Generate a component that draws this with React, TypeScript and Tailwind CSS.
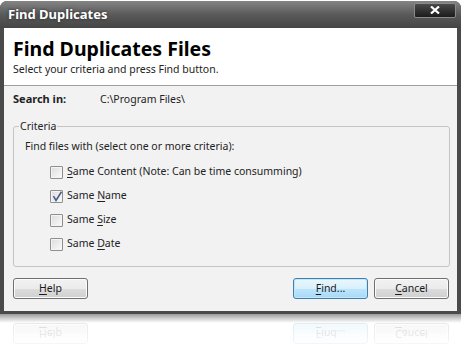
import React from "react";

const font = { fontFamily: '"Noto Sans", "Open Sans", sans-serif' };

function Check({ checked }: { checked?: boolean }) {
  return (
    <span className="relative w-[13px] h-[13px] border border-[#8f8f8f] rounded-[1px] bg-gradient-to-br from-[#dcdcdc] to-[#fbfbfb] shadow-[inset_0_0_0_1px_#f4f4f4] shrink-0">
      {checked && (
        <svg className="absolute left-[1px] top-[0px]" width="11" height="11" viewBox="0 0 11 11">
          <path d="M1.5 5.2 L4 9.5 L9.5 0.8" fill="none" stroke="#4a5f8a" strokeWidth="1.6" />
        </svg>
      )}
    </span>
  );
}

function Btn({ label, u, primary }: { label: string; u: string; primary?: boolean }) {
  const rest = label.slice(1);
  return (
    <button
      className={
        "w-[75px] h-[21px] rounded-[3px] border text-[10.5px] leading-none text-[#1a1a1a] " +
        (primary
          ? "border-[#3c7fb1] bg-[linear-gradient(#eaf6fd_0%,#d9f0fc_50%,#bee6fd_50%,#a7d9f5_100%)] shadow-[inset_0_0_0_1px_#c6e6f8]"
          : "border-[#707070] bg-[linear-gradient(#f2f2f2_0%,#ebebeb_50%,#dddddd_50%,#cfcfcf_100%)] shadow-[inset_0_0_0_1px_#fbfbfb]")
      }
    >
      <span className="underline underline-offset-2">{u}</span>
      {rest}
    </button>
  );
}

function ButtonRow() {
  return (
    <div className="flex items-center pl-[9px] pr-[8px]">
      <Btn label="Help" u="H" />
      <div className="flex-1" />
      <Btn label="Find..." u="F" primary />
      <div className="w-[6px]" />
      <Btn label="Cancel" u="C" />
    </div>
  );
}

export default function App() {
  const rows = [
    { u: "S", rest: "ame Content (Note: Can be time consumming)", pre: "" },
    { u: "N", rest: "ame", pre: "Same ", checked: true },
    { u: "S", rest: "ize", pre: "Same " },
    { u: "D", rest: "ate", pre: "Same " },
  ];
  return (
    <div className="w-[463px] h-[354px] bg-white overflow-hidden" style={font}>
      <div className="w-[461px] mt-[1px] rounded-t-[7px] bg-[#4a4a4a] px-[4px] pb-[3px] shadow-[0_1px_0_#303030]">
        {/* title bar */}
        <div className="h-[27px] -mx-[4px] px-[8px] rounded-t-[7px] bg-gradient-to-b from-[#858585] via-[#5a5a5a] to-[#454545] flex items-center justify-between">
          <span className="text-white font-bold text-[13px] [text-shadow:0_0_3px_#222]">Find Duplicates</span>
          <span className="w-[42px] h-[15px] -mt-[9px] -mr-[3px] border border-[#8a8a8a] rounded-[2px] bg-gradient-to-b from-[#4a4a4a] to-[#1c1c1c] flex items-center justify-center">
            <svg width="10" height="8" viewBox="0 0 10 8">
              <path d="M1 0.5 L9 7.5 M9 0.5 L1 7.5" stroke="white" strokeWidth="2.2" />
            </svg>
          </span>
        </div>
        {/* client */}
        <div className="bg-[#f2f2f2] h-[283px] flex flex-col">
          <div className="bg-white h-[58px] border-b border-[#a0a0a0] pl-[9px] pt-[8px]">
            <div className="text-[19.5px] font-bold leading-[26px] text-black">Find Duplicates Files</div>
            <div className="text-[10.5px] leading-[14px] text-[#222]">Select your criteria and press Find button.</div>
          </div>
          <div className="flex items-center h-[27px] pl-[9px] text-[10.5px] text-[#222]">
            <span className="w-[87px] font-bold text-[11px]">Search in:</span>
            <span>C:\Program Files\</span>
          </div>
          <fieldset className="mt-[6px] ml-[9px] w-[437px] h-[148px] border border-[#c5c5c5] rounded-[3px] px-[11px] pt-[5px]">
            <legend className="text-[10.5px] text-[#222] px-[1px] ml-[-6px] leading-[14px]">Criteria</legend>
            <div className="text-[10.5px] text-[#222] leading-[16px]">Find files with (select one or more criteria):</div>
            <div className="flex flex-col pl-[25px] pt-[6px]">
              {rows.map((r, i) => (
                <div key={i} className="flex items-center gap-[4px] h-[24px] text-[10.5px] text-[#222]">
                  <Check checked={r.checked} />
                  <span>
                    {r.pre}
                    <span className="underline underline-offset-2">{r.u}</span>
                    {r.rest}
                  </span>
                </div>
              ))}
            </div>
          </fieldset>
          <div className="pt-[11px]">
            <ButtonRow />
          </div>
        </div>
      </div>
      {/* reflection */}
      <div className="relative w-[461px] h-[40px] overflow-hidden">
        <div className="h-[9px] bg-gradient-to-b from-[#9a9a9a] to-white" />
        <div className="opacity-[0.18] scale-y-[-1] pt-[14px] px-[4px]">
          <ButtonRow />
        </div>
        <div className="absolute inset-0 bg-gradient-to-b from-transparent via-[rgba(255,255,255,0.4)] to-white" />
      </div>
    </div>
  );
}
